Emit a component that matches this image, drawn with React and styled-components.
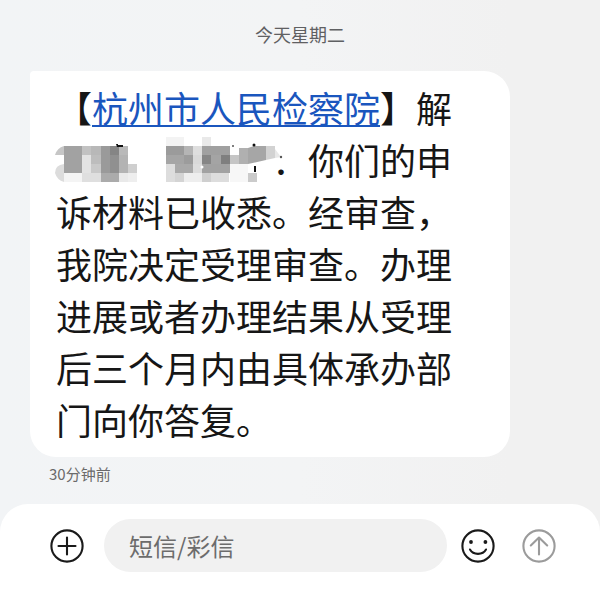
import React from "react";
import styled, { createGlobalStyle } from "styled-components";

const GlobalStyle = createGlobalStyle`
  * {
    box-sizing: border-box;
  }

  body {
    margin: 0;
    background: #f2f2f2;
    font-family: "Noto Sans CJK SC", "Noto Sans", sans-serif;
  }
`;

const Screen = styled.div`
  display: flex;
  flex-direction: column;
  min-height: 100vh;
  background: linear-gradient(to right, #f2f4f6, #f3f4f5 50%, #f1f1f1 85%);
`;

const Thread = styled.main`
  flex: 1;
  display: flex;
  flex-direction: column;
  padding: 20px 30px 0;
`;

const DateLabel = styled.time`
  align-self: center;
  font-size: 18px;
  line-height: 28px;
  color: #5f6062;
`;

const Bubble = styled.p`
  width: 480px;
  max-width: 100%;
  margin: 23px 0 0;
  padding: 10px 56px 12px 26px;
  border-radius: 4px 26px 26px 26px;
  background: #ffffff;
  color: #161616;
  font-size: 36px;
  line-height: 52px;
`;

const SenderLink = styled.a`
  color: #1a56be;
  text-decoration: underline;
  text-decoration-thickness: 2px;
  text-underline-offset: 2px;
  text-decoration-skip-ink: none;
`;

const Mosaic = styled.svg`
  position: relative;
  width: 216px;
  height: 48px;
  vertical-align: text-bottom;
  overflow: visible;
`;

const SentTime = styled.time`
  margin: 6px 0 0 19px;
  font-size: 15px;
  line-height: 22px;
  color: #6a6a6a;
`;

const Composer = styled.form`
  display: flex;
  align-items: center;
  padding: 15px 44px 17px 50px;
  border-radius: 28px 28px 0 0;
  background: #ffffff;
`;

const IconButton = styled.button`
  display: flex;
  flex: none;
  padding: 0;
  border: 0;
  background: none;
  color: ${({ $muted }) => ($muted ? "#9b9b9b" : "#1a1a1a")};

  & + & {
    margin-left: 27px;
  }
`;

const MessageInput = styled.input`
  flex: 1;
  min-width: 0;
  height: 53px;
  margin: 0 14px 0 20px;
  padding: 0 25px;
  border: 0;
  border-radius: 27px;
  outline: 0;
  background: #f1f1f1;
  color: #161616;
  font-family: inherit;
  font-size: 24px;

  &::placeholder {
    color: #6c6c6c;
    opacity: 1;
  }
`;

const Icon = styled.svg`
  width: 34px;
  height: 34px;
  fill: none;
  stroke: currentColor;
  stroke-width: 2.1;
  stroke-linecap: round;
  stroke-linejoin: round;
`;

/* Each tile: x, y, width, height, grey level */
const TILES = [
  [8, 9, 18, 27, "#a2a2a2"],
  [26, 9, 9, 9, "#c2c2c2"],
  [35, 9, 10, 9, "#b8b8b8"],
  [26, 18, 9, 18, "#e3e3e3"],
  [35, 18, 10, 9, "#bdbdbd"],
  [35, 27, 10, 9, "#c9c9c9"],
  [45, 9, 9, 27, "#9a9a9a"],
  [54, 9, 9, 9, "#858585"],
  [54, 18, 9, 18, "#909090"],
  [63, 9, 9, 9, "#b9b9b9"],
  [63, 18, 9, 18, "#b3b3b3"],
  [8, 36, 18, 9, "#f4f4f4"],
  [26, 36, 19, 9, "#dfdfdf"],
  [45, 36, 18, 9, "#ababab"],
  [63, 36, 9, 9, "#e9e9e9"],
  [72, 27, 9, 9, "#cfcfcf"],
  [72, 36, 9, 9, "#eeeeee"],
  [110, 0, 18, 9, "#f3f3f3"],
  [146, 0, 9, 9, "#e9e9e9"],
  [110, 9, 18, 9, "#9b9b9b"],
  [128, 9, 9, 9, "#b5b5b5"],
  [137, 9, 9, 9, "#dedede"],
  [146, 9, 28, 9, "#a0a0a0"],
  [110, 18, 18, 9, "#a5a5a5"],
  [128, 18, 9, 9, "#9c9c9c"],
  [137, 18, 9, 9, "#d9d9d9"],
  [146, 18, 9, 9, "#868686"],
  [155, 18, 10, 9, "#a4a4a4"],
  [165, 18, 9, 9, "#7f7f7f"],
  [110, 27, 9, 18, "#dddddd"],
  [119, 27, 18, 9, "#a9a9a9"],
  [137, 27, 9, 9, "#dddddd"],
  [146, 27, 28, 9, "#a2a2a2"],
  [119, 36, 9, 9, "#d4d4d4"],
  [128, 36, 18, 9, "#eeeeee"],
  [146, 36, 9, 9, "#cfcfcf"],
  [155, 36, 18, 9, "#dddddd"],
  [174, 18, 9, 9, "#c5c5c5"],
  [174, 27, 18, 18, "#f7f7f7"],
  [183, 11, 9, 16, "#b0b0b0"],
  [192, 36, 9, 9, "#cbcbcb"],
];

function HiddenNames() {
  return (
    <Mosaic viewBox="0 0 216 48" aria-hidden="true">
      <path d="M8 9v9H-1q2-7 9-9Z" fill="#c6c6c6" />
      <path d="M8 27v18q-7-2-9-9 0-8 9-9Z" fill="#dcdcdc" />
      {TILES.map(([x, y, width, height, fill]) => (
        <rect
          key={`${x}-${y}`}
          x={x}
          y={y}
          width={width}
          height={height}
          fill={fill}
          shapeRendering="crispEdges"
        />
      ))}
      <path d="M192 11l6-2h12v14l-18 4Z" fill="#a6a6a6" />
      <path d="M218 9h12v13h-12Z" fill="#ffffff" />
      <path d="M210 9h9v12l-9 2Z" fill="#d2d2d2" />
      <path d="M219 12l6 8-6 1Z" fill="#e8e8e8" />
      <circle cx="225" cy="20" r="1.2" fill="#555555" />
      <path d="M60 7h2v1h5v2h-6Z" fill="#111111" />
      <path d="M192 29h6v5q-5 0-6-5Z" fill="#ffffff" />
      <path d="M198 29h2v6h-2Z" fill="#111111" />
      <circle cx="198" cy="8" r="1.5" fill="#111111" />
      <circle cx="177" cy="9" r="1" fill="#555555" />
      <circle cx="146" cy="30" r="1.5" fill="#ffffff" />
    </Mosaic>
  );
}

export default function App() {
  return (
    <Screen>
      <GlobalStyle />
      <Thread>
        <DateLabel>今天星期二</DateLabel>
        <Bubble>
          【<SenderLink href="#sender">杭州市人民检察院</SenderLink>】解
          <HiddenNames />
          ：你们的申诉材料已收悉。经审查，我院决定受理审查。办理进展或者办理结果从受理后三个月内由具体承办部门向你答复。
        </Bubble>
        <SentTime>30分钟前</SentTime>
      </Thread>
      <Composer onSubmit={(event) => event.preventDefault()}>
        <IconButton type="button" aria-label="添加">
          <Icon viewBox="0 0 34 34">
            <circle cx="17" cy="17" r="15.6" />
            <path d="M17 8.5v17M8.5 17h17" />
          </Icon>
        </IconButton>
        <MessageInput type="text" placeholder="短信/彩信" aria-label="短信/彩信" />
        <IconButton type="button" aria-label="表情">
          <Icon viewBox="0 0 34 34">
            <circle cx="17" cy="17" r="15.6" />
            <path d="M9 20.5c3.2 5.8 12.8 5.8 16 0" />
            <circle cx="10" cy="13" r="1.9" fill="currentColor" stroke="none" />
            <circle cx="24.4" cy="13" r="1.9" fill="currentColor" stroke="none" />
          </Icon>
        </IconButton>
        <IconButton type="submit" aria-label="发送" $muted>
          <Icon viewBox="0 0 34 34">
            <circle cx="17" cy="17" r="15.6" />
            <path d="M17 25.5V9M8.8 16.5L17 8.6l8.2 7.9" />
          </Icon>
        </IconButton>
      </Composer>
    </Screen>
  );
}
